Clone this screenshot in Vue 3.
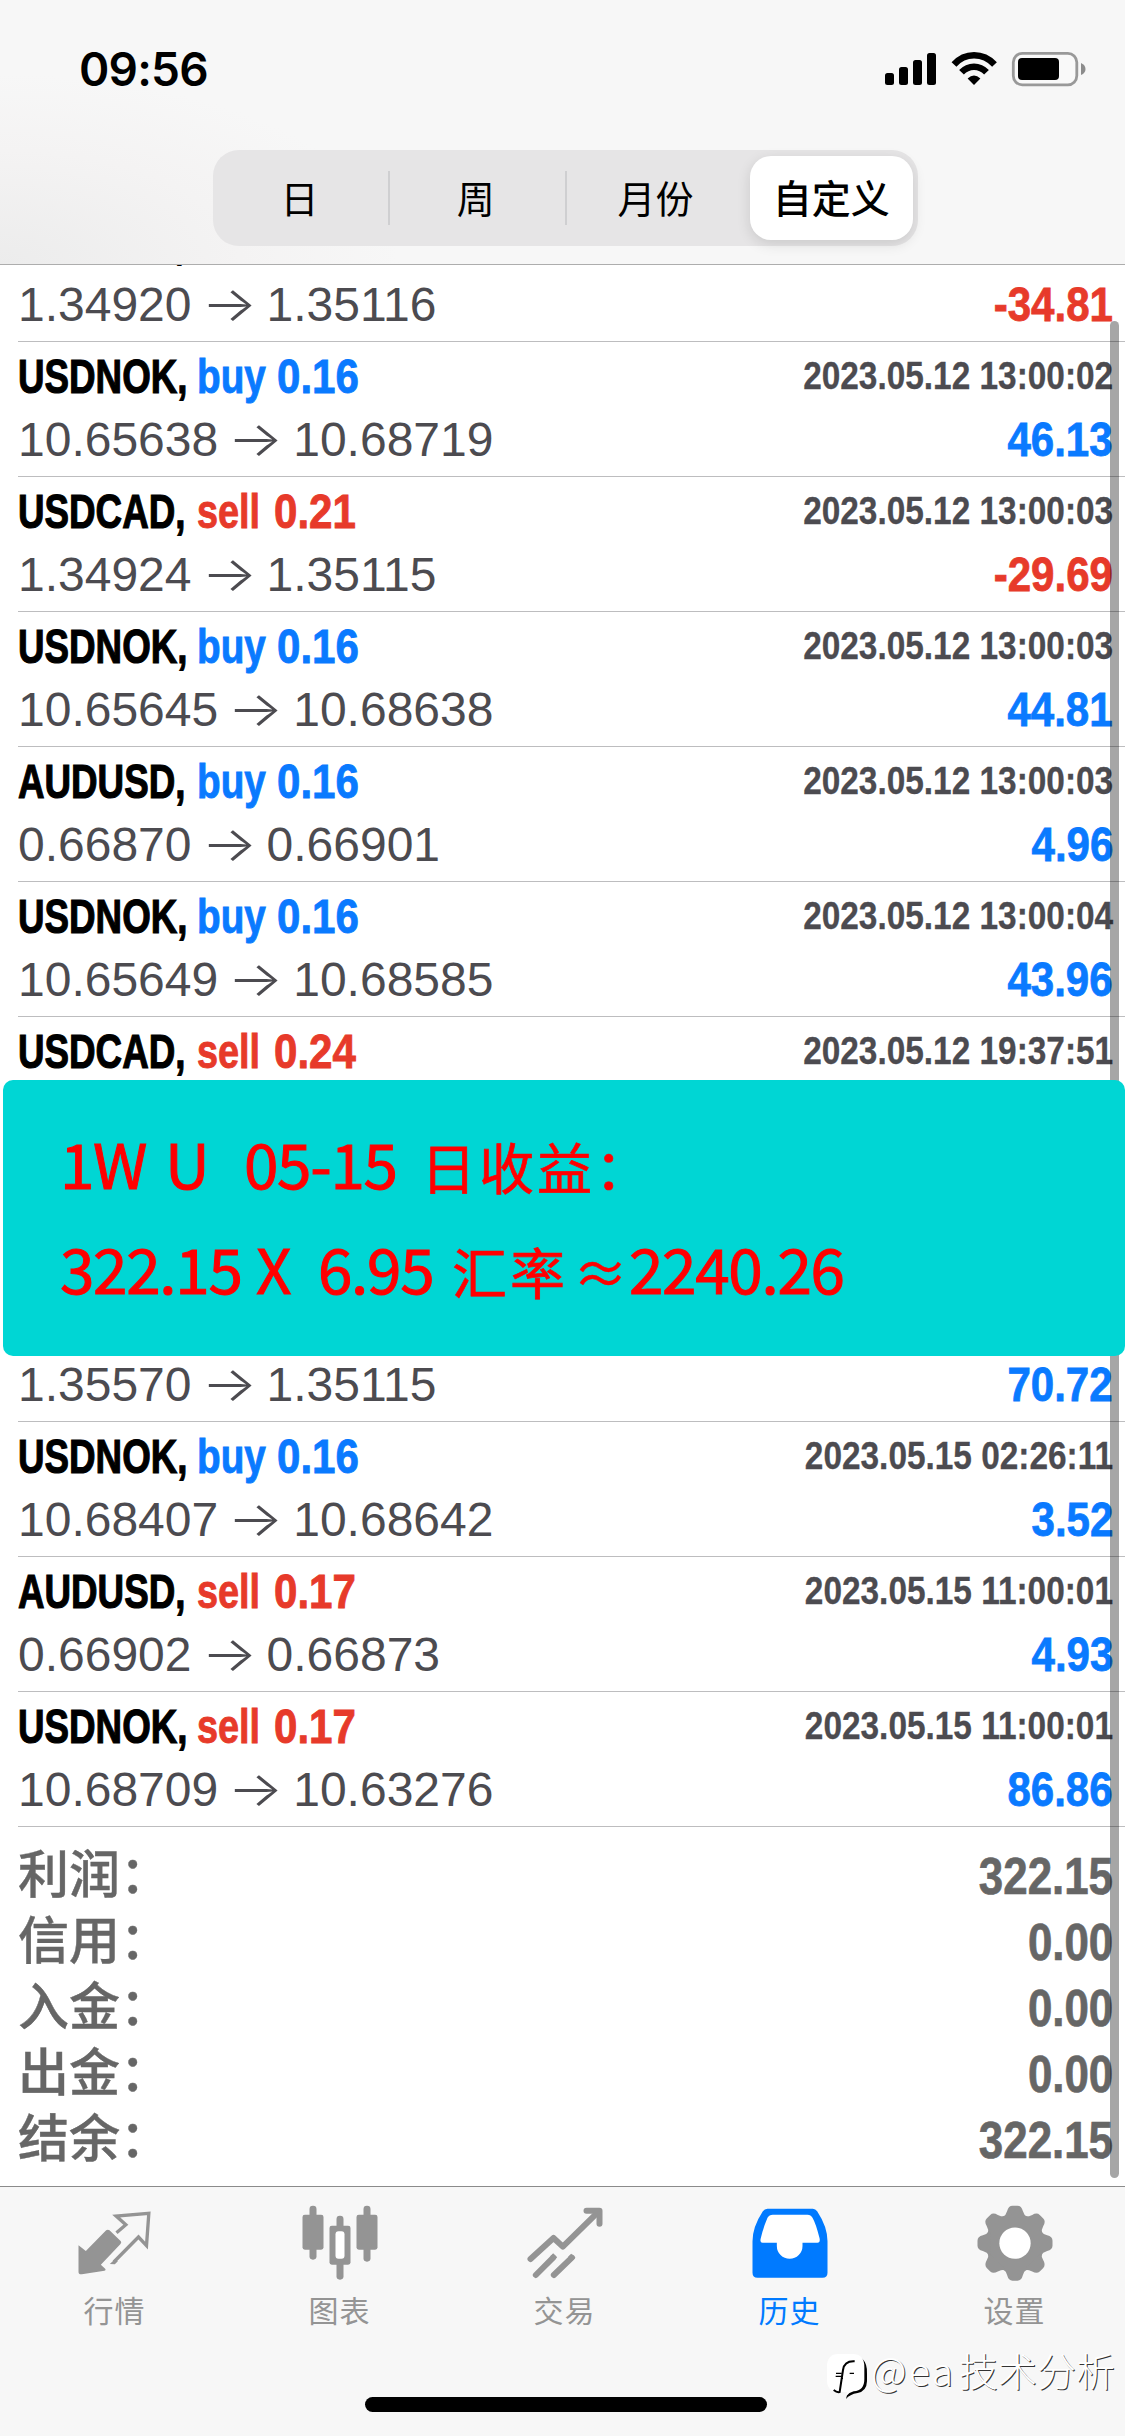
<script setup>
const periods = ['日', '周', '月份', '自定义']
const activePeriod = '自定义'

const before = [
  { symbol: 'USDNOK', side: 'buy', lots: '0.16', time: '2023.05.12 13:00:02', open: '10.65638', close: '10.68719', profit: '46.13' },
  { symbol: 'USDCAD', side: 'sell', lots: '0.21', time: '2023.05.12 13:00:03', open: '1.34924', close: '1.35115', profit: '-29.69' },
  { symbol: 'USDNOK', side: 'buy', lots: '0.16', time: '2023.05.12 13:00:03', open: '10.65645', close: '10.68638', profit: '44.81' },
  { symbol: 'AUDUSD', side: 'buy', lots: '0.16', time: '2023.05.12 13:00:03', open: '0.66870', close: '0.66901', profit: '4.96' },
  { symbol: 'USDNOK', side: 'buy', lots: '0.16', time: '2023.05.12 13:00:04', open: '10.65649', close: '10.68585', profit: '43.96' },
  { symbol: 'USDCAD', side: 'sell', lots: '0.24', time: '2023.05.12 19:37:51', cut: 'bottom' },
]
const after = [
  { open: '1.35570', close: '1.35115', profit: '70.72', cut: 'top' },
  { symbol: 'USDNOK', side: 'buy', lots: '0.16', time: '2023.05.15 02:26:11', open: '10.68407', close: '10.68642', profit: '3.52' },
  { symbol: 'AUDUSD', side: 'sell', lots: '0.17', time: '2023.05.15 11:00:01', open: '0.66902', close: '0.66873', profit: '4.93' },
  { symbol: 'USDNOK', side: 'sell', lots: '0.17', time: '2023.05.15 11:00:01', open: '10.68709', close: '10.63276', profit: '86.86' },
]
const first = { symbol: 'USDCAD', open: '1.34920', close: '1.35116', profit: '-34.81', cut: 'first' }
const groups = [[first, ...before], after]

const totals = [
  ['利润：', '322.15'],
  ['信用：', '0.00'],
  ['入金：', '0.00'],
  ['出金：', '0.00'],
  ['结余：', '322.15'],
]
</script>

<template>
  <div class="screen">
    <header class="header">
      <div class="status">
        <span class="clock">09:56</span>
        <svg class="status-icons" width="202" height="36" viewBox="884 51 202 36">
          <g fill="#000">
            <rect x="885" y="73" width="9" height="12" rx="2.5" />
            <rect x="899" y="67" width="9" height="18" rx="2.5" />
            <rect x="913" y="60" width="9" height="25" rx="2.5" />
            <rect x="927" y="53" width="9" height="32" rx="2.5" />
            <path d="M974 85 L967.6 78.4 Q974 72.600 980.4 78.400 Z" />
          </g>
          <g fill="none" stroke="#000" stroke-width="6.500">
            <path d="M954 64.500 C965 52.200 983 52.200 994.500 64.500" />
            <path d="M961.500 72.300 C968.500 64.800 979.500 64.800 986.500 72.300" />
          </g>
          <rect x="1013.300" y="53.300" width="63.500" height="31.500" rx="9" fill="#fff" fill-opacity=".3" stroke="#999" stroke-width="2.800" />
          <rect x="1018" y="58" width="41" height="22" rx="4" />
          <path d="M1081 63 Q1085.500 65 1085.500 69 Q1085.500 73 1081 75 Z" fill="#8c8c8c" />
        </svg>
      </div>
      <nav class="segments">
        <span v-for="p in periods" :key="p" class="segment" :class="{ active: p === activePeriod }">{{ p }}</span>
      </nav>
    </header>

    <main class="history">
      <template v-for="(group, g) in groups" :key="g">
        <section v-if="g === 1" class="banner">
          <div class="note note-a">
            <span>1W</span><span>U</span><span>05-15</span><span class="han">日收益：</span>
          </div>
          <div class="note note-b">
            <span>322.15</span><span>X</span><span>6.95</span><span class="han">汇率</span><span class="approx">≈</span><span>2240.26</span>
          </div>
        </section>
        <article v-for="(d, i) in group" :key="i" class="deal" :class="d.cut">
          <div v-if="d.symbol" class="line title">
            <span class="cell symbol"><b>{{ d.symbol }},</b></span>
            <span v-if="d.side" :class="['cell', 'side', d.side]"><b>{{ d.side }}</b></span>
            <span v-if="d.side" :class="['cell', 'lots', d.side]"><b>{{ d.lots }}</b></span>
            <time v-if="d.time" class="time">{{ d.time }}</time>
          </div>
          <div v-if="d.open" class="line prices">
            <span>{{ d.open }}</span><span class="arrow">→</span><span>{{ d.close }}</span>
            <strong class="profit" :class="d.profit[0] === '-' ? 'sell' : 'buy'">{{ d.profit }}</strong>
          </div>
        </article>
      </template>

      <dl class="totals">
        <div v-for="[label, value] in totals" :key="label" class="total">
          <dt>{{ label }}</dt>
          <dd>{{ value }}</dd>
        </div>
      </dl>
      <i class="scrollbar"></i>
    </main>

    <footer class="tabs">
      <div class="tab">
        <svg viewBox="217.500 100 240 240">
          <path fill="currentColor" d="M234 227 L256 244 L317 182 Q322 178 327 182 L361 215 Q364 219 360 223 L301 285 L314 297 Q318 301 312 303 L244 314 Q234 315 234 306 Z" />
          <path fill="none" stroke="currentColor" stroke-width="10" d="M348 189 L376 165 L347 139 L445 131 L438 228 L414 202 L340 277" />
          <path fill="currentColor" d="M328 283 L343 284 L352 275 L344 268 Z" />
        </svg>
        <span>行情</span>
      </div>
      <div class="tab">
        <svg viewBox="892.500 100 240 240">
          <g fill="currentColor">
            <rect x="906" y="135" width="63" height="105" rx="7" />
            <rect x="927" y="108" width="21" height="162" rx="10" />
            <rect x="987" y="168" width="63" height="117" rx="7" />
            <rect x="1008" y="138" width="21" height="192" rx="10" />
            <rect x="1068" y="135" width="63" height="105" rx="7" />
            <rect x="1089" y="108" width="21" height="168" rx="10" />
          </g>
          <rect x="1005" y="185" width="27" height="82" rx="9" fill="#fff" />
        </svg>
        <span>图表</span>
      </div>
      <div class="tab">
        <svg viewBox="367.500 100 240 240">
          <g fill="none" stroke="currentColor" stroke-width="18" stroke-linecap="round" stroke-linejoin="round">
            <path d="M390 268 L459 205 L487 231 L594 126" />
            <path d="M558 123 L597 123 L597 162" />
            <path d="M406 316 L458 264 M460 316 L514 264" />
          </g>
          <path fill="currentColor" d="M458 251 L470 263 L461 272 L449 260 Z M512 252 L525 264 L515 273 L503 261 Z" />
        </svg>
        <span>交易</span>
      </div>
      <div class="tab on">
        <svg viewBox="67.500 100 240 240">
          <path fill="currentColor" d="M126 117 H262 Q270 117 275 125 Q306 172 306 215 V309 Q306 324 291 324 H96 Q81 324 81 309 V215 Q81 172 112 125 Q117 117 126 117 Z" />
          <path fill="#fff" d="M142 135 H246 Q256 135 261 144 Q271 161 282 205 Q285 219 276 219 H231 V229 A38.500 38.500 0 0 1 154 229 V219 H111 Q102 219 106 205 Q115 168 126 144 Q131 135 142 135 Z" />
        </svg>
        <span>历史</span>
      </div>
      <div class="tab">
        <svg viewBox="742.500 100 240 240">
          <g fill="currentColor">
            <circle cx="868.500" cy="220.500" r="88" />
            <path v-for="n in 8" :key="n" :transform="`rotate(${n * 45} 868.5 220.5)`" d="M830 146 Q842 136 845 124 Q849 108 861 108 H876 Q888 108 892 124 Q895 136 907 146 Z" />
          </g>
          <circle cx="868.500" cy="220.500" r="47" fill="#fff" />
        </svg>
        <span>设置</span>
      </div>
    </footer>
    <i class="home"></i>
    <div class="watermark">
      <svg width="44" height="46" viewBox="303 549 132 138">
        <path fill="#000" d="M412 566 Q428 582 426 612 V634 Q425 664 398 669 Q374 673 363 687 L369 664 Z" />
        <path fill="#fff" d="M340 552 H382 Q418 552 418 590 V628 Q418 662 386 664 Q372 667 364 678 L366 666 H340 Q306 666 306 630 V590 Q306 552 340 552 Z" />
        <path fill="none" stroke="#000" stroke-width="6" d="M389 574 Q358 572 354 600 L344 666 Q336 668 326 660" />
        <path fill="none" stroke="#000" stroke-width="4" d="M333 610 H350 M332 619 H350 M374 610 H387 M354 625 H350" />
      </svg>
      <span class="at">@ea</span><span>技术分析</span>
    </div>
  </div>
</template>

<style>
body { margin: 0; background: #fff; }
</style>

<style scoped>
.screen {
  position: relative;
  display: flex;
  flex-direction: column;
  width: 1125px;
  height: 2436px;
  overflow: hidden;
  background: #fff;
  font-family: "Liberation Sans", "Noto Sans CJK SC", sans-serif;
}
.header {
  box-sizing: border-box;
  flex: none;
  height: 265px;
  border-bottom: 1px solid #adadad;
  background: radial-gradient(ellipse 400px 190px at 0 100%, #ececec, #f4f3f3 60%, #f7f7f7);
}
.status {
  display: flex;
  align-items: center;
  justify-content: space-between;
  height: 138px;
  padding: 0 39px 0 79px;
}
.clock { font: 600 46px/1 Inter, sans-serif; letter-spacing: -.8px; }
.segments {
  box-sizing: border-box;
  display: grid;
  grid-template-columns: repeat(4, 1fr);
  width: 705px;
  height: 96px;
  margin: 12px 0 0 213px;
  border-radius: 26px;
  background: #e6e5e6;
}
.segment {
  position: relative;
  display: flex;
  align-items: center;
  justify-content: center;
  padding-bottom: 3px;
  font: 400 38px/1 "Noto Sans CJK SC", sans-serif;
}
.segment:nth-child(-n+2)::after {
  content: "";
  position: absolute;
  right: -1px;
  top: 21px;
  width: 2px;
  height: 54px;
  background: #cfcfd1;
}
.segment:nth-child(-n+2) { padding-right: 3px; }
.segment:nth-child(3) { padding-left: 4px; }
.segment.active {
  margin: 6px 5px 6px 8px;
  border-radius: 21px;
  background: #fff;
  font-weight: 500;
  font-size: 39px;
  box-shadow: 0 4px 14px rgba(0, 0, 0, .12);
}
.history { position: relative; flex: none; height: 1921px; overflow: hidden; }
.deal {
  box-sizing: border-box;
  height: 135px;
  padding: 0 12px 0 18px;
  background: linear-gradient(#bdbdbf, #bdbdbf) 18px 100% / 100% 1px no-repeat;
}
.deal.first { margin-top: -58px; }
.deal.bottom { height: 63px; background: none; }
.deal.top { height: 66px; }
.deal.top .prices { line-height: 57px; }
.line { display: flex; align-items: baseline; white-space: nowrap; }
.title { height: 66px; font: 700 49px/69px "Liberation Sans", sans-serif; }
.cell { overflow: visible; }
.cell b { display: inline-block; transform-origin: 0 50%; -webkit-text-stroke: .9px currentColor; }
.symbol { width: 179px; }
.symbol b { transform: scaleX(.75); -webkit-text-stroke-width: 1.200px; }
.side b { transform: scaleX(.79); }
.side.buy { width: 80px; }
.side.sell { width: 77px; }
.side.sell b { transform: scaleX(.772); }
.lots { width: 84px; }
.lots b { transform: scaleX(.858); }
.buy { color: #0a7aff; }
.sell { color: #e73a2a; }
.time {
  margin-left: auto;
  align-self: flex-start;
  font-size: 39px;
  line-height: 67px;
  color: #4c4b50;
  transform: scaleX(.856);
  transform-origin: 100% 50%;
  -webkit-text-stroke: .3px currentColor;
}
.prices { height: 67px; font-size: 48px; line-height: 63px; color: #4c4b50; }
.arrow { width: 75px; text-align: center; font-family: Inter, sans-serif; font-weight: 300; transform: scaleX(1.22); line-height: 1; }
.profit {
  margin-left: auto;
  font-weight: 700;
  font-size: 49px;
  transform: scaleX(.858);
  transform-origin: 100% 50%;
  -webkit-text-stroke: .8px currentColor;
}
.banner {
  position: relative;
  z-index: 2;
  box-sizing: border-box;
  height: 276px;
  margin-left: 3px;
  padding: 30px 0 0 57px;
  border-radius: 10px;
  background: #00d6d4;
  color: #f00;
  font: 400 62px/105px "Noto Sans CJK SC", sans-serif;
  letter-spacing: -1.300px;
  -webkit-text-stroke: 1px #f00;
}
.note { display: grid; height: 105px; white-space: nowrap; align-items: baseline; }
.note-a { grid-template-columns: 105px 79px 177px 1fr; }
.note-b { grid-template-columns: 196px 62px 134px 121px 56px 1fr; }
.han { font-size: 55px; letter-spacing: 3px; -webkit-text-stroke-width: .7px; }
.approx { font-size: 55px; -webkit-text-stroke-width: .4px; }
.totals { margin: 0; padding: 17px 12px 0 18px; color: #666; }
.total { display: flex; justify-content: space-between; height: 66px; line-height: 66px; }
dt { margin-top: -6px; font: 500 51px/66px "Noto Sans CJK SC", sans-serif; -webkit-text-stroke: .4px currentColor; }
dd {
  margin: 0;
  font: 700 51px/66px "Liberation Sans", sans-serif;
  transform: scaleX(.86);
  transform-origin: 100% 50%;
  -webkit-text-stroke: .7px currentColor;
}
.scrollbar { position: absolute; left: 1110px; top: 56px; width: 9px; height: 1857px; border-radius: 5px; background: rgba(0, 0, 0, .35); }
.tabs {
  box-sizing: border-box;
  flex: 1;
  display: grid;
  grid-template-columns: repeat(5, 225px);
  padding-top: 16px;
  border-top: 1px solid #8b8b8b;
  background: #f7f7f7;
}
.tab { display: flex; flex-direction: column; align-items: center; color: #949494; }
.tab svg { width: 80px; height: 80px; }
.tab span { margin-top: 4px; padding-left: 4px; font: 400 30px/44px "Noto Sans CJK SC", sans-serif; letter-spacing: 1px; }
.tab.on { color: #007aff; }
.home { position: absolute; left: 365px; top: 2397px; width: 402px; height: 15px; border-radius: 8px; background: #000; }
.watermark { position: absolute; left: 826px; top: 2353px; display: flex; color: #fff; }
.watermark span { margin-top: -4px; font: 300 39px/40px "Noto Sans CJK SC", sans-serif; text-shadow: 1px 1px 0 #333; }
.watermark .at { width: 88px; margin-left: 1px; letter-spacing: 2.500px; }
</style>
